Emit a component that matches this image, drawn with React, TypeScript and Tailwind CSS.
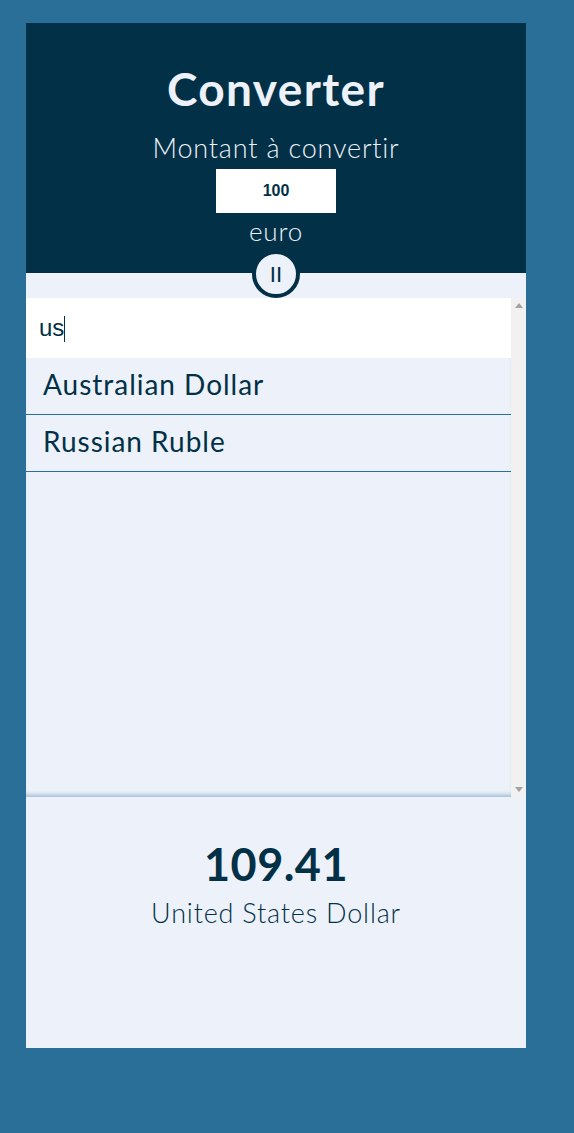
import { useState } from "react";

const currencies = ["Australian Dollar", "Russian Ruble"];

const display = { fontFamily: "Lato, 'Noto Sans', sans-serif" };
const plain = { fontFamily: "'Liberation Sans', Arial, sans-serif" };

export default function App() {
  const [amount, setAmount] = useState("100");
  const [query, setQuery] = useState("us");

  return (
    <div className="min-h-[1133px] bg-[#2a6f97] pt-[23px] pl-[26px]">
      <div className="flex h-[1025px] w-[500px] flex-col bg-[#edf2fa] text-[#023047]" style={display}>
        <header className="relative flex h-[250px] flex-col items-center bg-[#023047] pt-[44px] text-[#edf2fa]">
          <h1 className="text-[46px] font-bold leading-[44px] tracking-[0.03em]">Converter</h1>
          <p className="mt-[21px] text-[27px] font-light leading-[32px] tracking-[0.03em]">Montant à convertir</p>
          <input
            value={amount}
            onChange={(e) => setAmount(e.target.value)}
            className="mt-[5px] h-[44px] w-[120px] bg-white text-center text-[16px] font-bold text-[#023047] outline-none"
            style={plain}
          />
          <p className="mt-[3px] text-[26px] font-light leading-[30px] tracking-[0.03em]">euro</p>
          <button className="absolute left-1/2 top-[227px] flex h-[48px] w-[48px] -translate-x-1/2 items-center justify-center rounded-full border-[4px] border-[#023047] bg-[#edf2fa] text-[22px] font-normal leading-none text-[#023047]">
            II
          </button>
        </header>

        <div className="mt-[25px] flex h-[499px]">
          <div className="min-w-0 flex-1 overflow-hidden shadow-[inset_0_-5px_5px_-3px_#9ab6cf]">
            <div className="relative">
              <input
                autoFocus
                value={query}
                onChange={(e) => setQuery(e.target.value)}
                className="block h-[60px] w-full bg-white px-[13px] text-[24px] text-[#023047] caret-[#023047] outline-none"
                style={plain}
              />
              <span className="pointer-events-none absolute left-[38px] top-[18px] h-[26px] w-px bg-[#023047]" />
            </div>
            {currencies.map((c) => (
              <div
                key={c}
                className="flex h-[57px] items-center border-b border-[#2a6f97] px-[17px] pb-[4px] text-[28px] leading-none tracking-[0.035em]"
              >
                {c}
              </div>
            ))}
          </div>
          {/* scrollbar track */}
          <div className="flex w-[15px] flex-col items-center justify-between bg-[#f1f1f1] pt-[5px] pb-[5px]">
            <svg width="8" height="5" viewBox="0 0 8 5">
              <path d="M0 5 L4 0 L8 5 Z" fill="#a3a3a3" />
            </svg>
            <svg width="8" height="5" viewBox="0 0 8 5">
              <path d="M0 0 L4 5 L8 0 Z" fill="#a3a3a3" />
            </svg>
          </div>
        </div>

        <div className="flex flex-col items-center pt-[43px]">
          <p className="text-[45px] font-bold leading-[48px] tracking-[0.01em]">109.41</p>
          <p className="mt-[9px] text-[27px] font-light leading-[32px] tracking-[0.03em]">United States Dollar</p>
        </div>
      </div>
    </div>
  );
}
